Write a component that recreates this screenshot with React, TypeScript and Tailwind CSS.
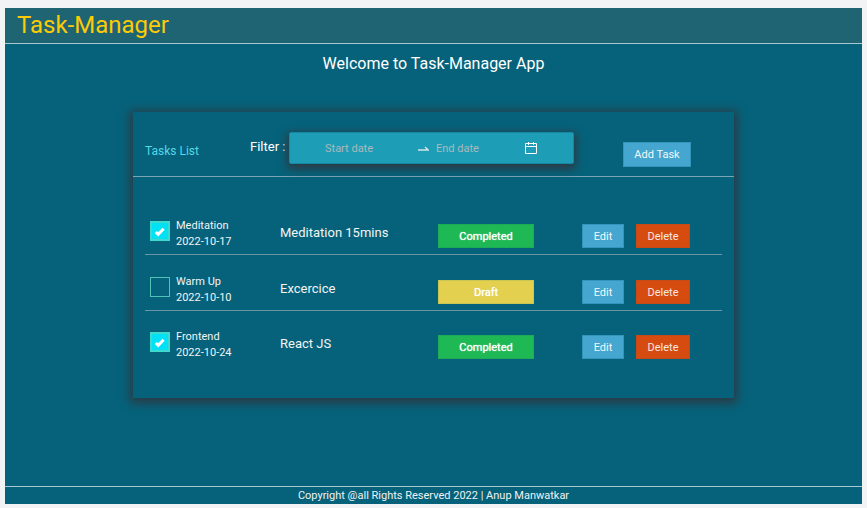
import { useState } from "react";

type Status = "Completed" | "Draft";

interface Task {
  id: number;
  title: string;
  date: string;
  description: string;
  status: Status;
}

const tasks: Task[] = [
  { id: 1, title: "Meditation", date: "2022-10-17", description: "Meditation 15mins", status: "Completed" },
  { id: 2, title: "Warm Up", date: "2022-10-10", description: "Excercice", status: "Draft" },
  { id: 3, title: "Frontend", date: "2022-10-24", description: "React JS", status: "Completed" },
];

function CalendarIcon() {
  return (
    <svg width="12" height="12" viewBox="0 0 12 12" fill="none" stroke="currentColor" aria-hidden="true">
      <path d="M.5 1.5h11v10H.5zM.5 4.5h11M3.5 0v3M8.5 0v3" />
    </svg>
  );
}

function SwapArrow() {
  return (
    <svg width="11" height="6" viewBox="0 0 11 6" className="shrink-0 text-[#d3e5e8]" aria-hidden="true">
      <path d="M0 5h10.2L7 2" fill="none" stroke="currentColor" strokeWidth="1.3" />
    </svg>
  );
}

function DateRange() {
  return (
    <div className="flex h-8 w-[285px] items-center rounded-[2px] border border-[#1688a3] bg-[#1e9db6] pr-9 text-white shadow-[0_3px_9px_2px_#2c3a45]">
      <input
        aria-label="Start date"
        placeholder="Start date"
        className="w-[128px] bg-transparent pt-0.5 pl-[35px] text-[11px] outline-none placeholder:text-[#a9b9bd]"
      />
      <SwapArrow />
      <input
        aria-label="End date"
        placeholder="End date"
        className="min-w-0 flex-1 bg-transparent pt-0.5 pl-[7px] text-[11px] outline-none placeholder:text-[#a9b9bd]"
      />
      <button type="button" aria-label="Open calendar">
        <CalendarIcon />
      </button>
    </div>
  );
}

function TaskRow({ task }: { task: Task }) {
  const [done, setDone] = useState(task.status === "Completed");
  const inputId = `task-${task.id}`;
  return (
    <li className="flex items-start border-b border-[#6b96a4] pt-[25px] pb-1.5 last:border-b-0 last:pt-6">
      <div className="flex h-6 w-[135px] items-center pl-[5px]">
        <span className="relative -mt-2.5 flex h-5 w-5 shrink-0">
          <input
            id={inputId}
            type="checkbox"
            checked={done}
            onChange={() => setDone(!done)}
            className="peer h-5 w-5 appearance-none border border-[#4fc4b4] checked:border-2 checked:border-[#3ed8cc] checked:bg-[#00e1f5]"
          />
          <svg
            viewBox="0 0 20 20"
            className="pointer-events-none absolute inset-0 hidden h-5 w-5 text-white peer-checked:block"
            aria-hidden="true"
          >
            <path d="M5.8 11l2.4 2.4 5.4-5.6" fill="none" stroke="currentColor" strokeWidth="3" />
          </svg>
        </span>
        <label htmlFor={inputId} className="-mt-1 pl-1.5 text-[11px] leading-4 text-[#f0f4f5]">
          {task.title}
          <br />
          {task.date}
        </label>
      </div>
      <p className="-mt-px w-[158px] text-[13px] leading-5 text-[#f4f4f4]">{task.description}</p>
      <span
        className={`h-6 w-24 border text-center text-[11px] leading-6 text-white [text-shadow:0_0_1px_#fff] ${
          task.status === "Completed" ? "border-[#1cab57] bg-[#1eb854]" : "border-[#cbc552] bg-[#e2d04e]"
        }`}
      >
        {task.status}
      </span>
      <button type="button" className="ml-12 h-6 w-[42px] border border-[#3495bb] bg-[#45a6cf] pt-0.5 text-[11px] text-[#f2f8fb]">
        Edit
      </button>
      <button type="button" className="ml-3 h-6 w-[54px] border border-[#c54a18] bg-[#d64b0f] pt-0.5 text-[11px] text-[#f5e8e3]">
        Delete
      </button>
    </li>
  );
}

export default function App() {
  return (
    <div className="min-h-screen bg-[#f2f3f4] pt-2 pr-[5px] pb-1 pl-[5px] font-['Roboto',sans-serif]">
      <div className="flex min-h-[calc(100vh-12px)] flex-col bg-[#06627a]">
        <header className="border-b border-[#a9c9d0] bg-[#1f6472] px-3">
          <h1 className="text-2xl leading-[35px] text-[#fccb05]">Task-Manager</h1>
        </header>
        <main className="flex flex-1 flex-col items-center pt-2">
          <h2 className="text-base leading-6 text-white">Welcome to Task-Manager App</h2>
          <section className="mt-9 w-full max-w-[601px] bg-[#06627a] pb-[33px] shadow-[0_2px_9px_3px_#2c3a45]">
            <div className="flex h-[65px] items-start border-b border-[#7ba6b2] pl-3">
              <h3 className="w-[105px] pt-[29px] text-xs leading-5 text-[#55d7e6]">Tasks List</h3>
              <span className="w-[39px] pt-[25px] text-[13px] leading-5 text-white">Filter :</span>
              <div className="pt-5">
                <DateRange />
              </div>
              <button type="button" className="mt-[30px] ml-[49px] h-[25px] w-[68px] border border-[#3495bb] bg-[#45a6cf] pt-0.5 text-[11px] text-[#f2f8fb]">
                Add Task
              </button>
            </div>
            <ul className="mx-3 mt-[22px]">
              {tasks.map((task) => (
                <TaskRow key={task.id} task={task} />
              ))}
            </ul>
          </section>
        </main>
        <footer className="border-t border-[#a9c9d0] text-center text-[11px] leading-[17px] text-[#eef2f3]">
          Copyright @all Rights Reserved 2022 | Anup Manwatkar
        </footer>
      </div>
    </div>
  );
}
